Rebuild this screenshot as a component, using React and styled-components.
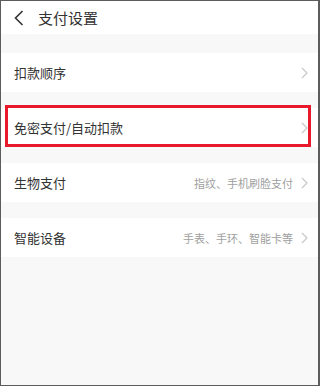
import React from "react";
import styled, { createGlobalStyle } from "styled-components";

const Global = createGlobalStyle`
  html, body { margin: 0; padding: 0; }
  body { font-family: "Noto Sans CJK SC", "Noto Sans", sans-serif; }
`;

const Frame = styled.div`
  box-sizing: border-box;
  width: 320px;
  height: 386px;
  border: 1px solid #5c5c5c;
  border-right-width: 2px;
  background: #f8f8f8;
  display: flex;
  flex-direction: column;
  overflow: hidden;
`;

const Header = styled.div`
  height: 33px;
  background: #fff;
  display: flex;
  align-items: center;
  padding-left: 13px;
  gap: 14px;
`;

const Title = styled.div`
  font-size: 15px;
  color: #333;
  line-height: 1;
`;

const List = styled.div`
  display: flex;
  flex-direction: column;
  padding-top: 19px;
  gap: 16px;
`;

const Row = styled.div`
  position: relative;
  height: 39px;
  background: #fff;
  display: flex;
  align-items: center;
  padding: 0 10px 0 13px;
`;

const Label = styled.div`
  flex: 1;
  font-size: 13px;
  color: #333;
`;

const Hint = styled.div`
  font-size: 11px;
  color: #a0a0a0;
  margin-right: 8px;
`;

const Highlight = styled.div`
  position: absolute;
  left: 4px;
  right: 7px;
  top: -3px;
  bottom: 0;
  border: 3px solid #e8192c;
  pointer-events: none;
`;

const Chevron = ({ color = "#c8c8c8" }) => (
  <svg width="7" height="12" viewBox="0 0 7 12">
    <path d="M1 1 L6 6 L1 11" fill="none" stroke={color} strokeWidth="1.2" />
  </svg>
);

const Back = () => (
  <svg width="10" height="16" viewBox="0 0 10 16">
    <path d="M8.5 1 L1.5 8 L8.5 15" fill="none" stroke="#333" strokeWidth="1.6" />
  </svg>
);

const rows = [
  { label: "扣款顺序" },
  { label: "免密支付/自动扣款", hl: true },
  { label: "生物支付", hint: "指纹、手机刷脸支付" },
  { label: "智能设备", hint: "手表、手环、智能卡等" },
];

export default function App() {
  return (
    <>
      <Global />
      <Frame>
        <Header>
          <Back />
          <Title>支付设置</Title>
        </Header>
        <List>
          {rows.map((r) => (
            <Row key={r.label}>
              <Label>{r.label}</Label>
              {r.hint && <Hint>{r.hint}</Hint>}
              <Chevron />
              {r.hl && <Highlight />}
            </Row>
          ))}
        </List>
      </Frame>
    </>
  );
}
